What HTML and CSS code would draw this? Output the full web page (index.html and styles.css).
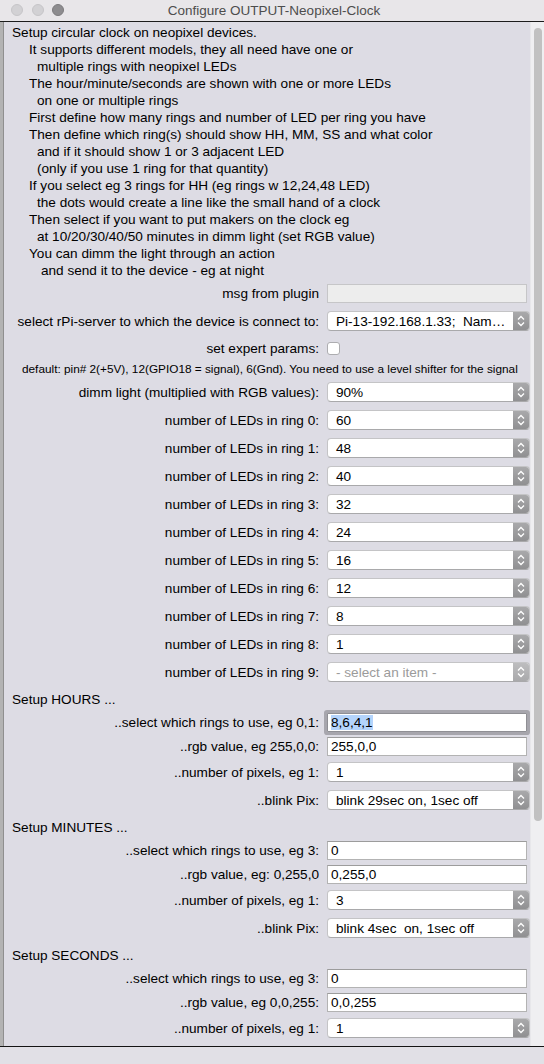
FILE: index.html
```html
<!DOCTYPE html>
<html>
<head>
<meta charset="utf-8">
<link rel="stylesheet" href="styles.css">
</head>
<body>
<div class="window">
  <div class="titlebar">
    <div class="lights"><span class="light"></span><span class="light"></span><span class="light dark"></span></div>
    <div class="title">Configure OUTPUT-Neopixel-Clock</div>
    <div></div>
  </div>
  <div class="main">
    <div class="edge"></div>
    <div class="content">
      <div class="desc">
        <div>Setup circular clock on neopixel devices.</div>
        <div class="i1">It supports different models, they all need have one or</div>
        <div class="i2">multiple rings with neopixel LEDs</div>
        <div class="i1">The hour/minute/seconds are shown with one or more LEDs</div>
        <div class="i2">on one or multiple rings</div>
        <div class="i1">First define how many rings and number of LED per ring you have</div>
        <div class="i1">Then define which ring(s) should show HH, MM, SS and what color</div>
        <div class="i2">and if it should show 1 or 3 adjacent LED</div>
        <div class="i2">(only if you use 1 ring for that quantity)</div>
        <div class="i1">If you select eg 3 rings for HH (eg rings w 12,24,48 LED)</div>
        <div class="i2">the dots would create a line like the small hand of a clock</div>
        <div class="i1">Then select if you want to put makers on the clock eg</div>
        <div class="i2">at 10/20/30/40/50 minutes in dimm light (set RGB value)</div>
        <div class="i1b">You can dimm the light through an action</div>
        <div class="i3">and send it to the device - eg at night</div>
      </div>

      <div class="row"><div class="lbl">msg from plugin</div><div class="field disabled"></div></div>
      <div class="row"><div class="lbl">select rPi-server to which the device is connect to:</div>
        <div class="popup"><div class="val">Pi-13-192.168.1.33;&nbsp; Nam…</div><div class="arr"><svg width="16" height="18" viewBox="0 0 16 18"><path d="M5 7.5 L8 4.5 L11 7.5 M5 10.5 L8 13.5 L11 10.5" fill="none" stroke="#fff" stroke-width="1.3"/></svg></div></div></div>
      <div class="row expert"><div class="lbl">set expert params:</div><div class="check"></div></div>
      <div class="note">default: pin# 2(+5V), 12(GPIO18 = signal), 6(Gnd). You need to use a level shifter for the signal</div>

      <div class="row"><div class="lbl">dimm light (multiplied with RGB values):</div>
        <div class="popup"><div class="val">90%</div><div class="arr"><svg width="16" height="18" viewBox="0 0 16 18"><path d="M5 7.5 L8 4.5 L11 7.5 M5 10.5 L8 13.5 L11 10.5" fill="none" stroke="#fff" stroke-width="1.3"/></svg></div></div></div>
      <div class="row"><div class="lbl">number of LEDs in ring 0:</div>
        <div class="popup"><div class="val">60</div><div class="arr"><svg width="16" height="18" viewBox="0 0 16 18"><path d="M5 7.5 L8 4.5 L11 7.5 M5 10.5 L8 13.5 L11 10.5" fill="none" stroke="#fff" stroke-width="1.3"/></svg></div></div></div>
      <div class="row"><div class="lbl">number of LEDs in ring 1:</div>
        <div class="popup"><div class="val">48</div><div class="arr"><svg width="16" height="18" viewBox="0 0 16 18"><path d="M5 7.5 L8 4.5 L11 7.5 M5 10.5 L8 13.5 L11 10.5" fill="none" stroke="#fff" stroke-width="1.3"/></svg></div></div></div>
      <div class="row"><div class="lbl">number of LEDs in ring 2:</div>
        <div class="popup"><div class="val">40</div><div class="arr"><svg width="16" height="18" viewBox="0 0 16 18"><path d="M5 7.5 L8 4.5 L11 7.5 M5 10.5 L8 13.5 L11 10.5" fill="none" stroke="#fff" stroke-width="1.3"/></svg></div></div></div>
      <div class="row"><div class="lbl">number of LEDs in ring 3:</div>
        <div class="popup"><div class="val">32</div><div class="arr"><svg width="16" height="18" viewBox="0 0 16 18"><path d="M5 7.5 L8 4.5 L11 7.5 M5 10.5 L8 13.5 L11 10.5" fill="none" stroke="#fff" stroke-width="1.3"/></svg></div></div></div>
      <div class="row"><div class="lbl">number of LEDs in ring 4:</div>
        <div class="popup"><div class="val">24</div><div class="arr"><svg width="16" height="18" viewBox="0 0 16 18"><path d="M5 7.5 L8 4.5 L11 7.5 M5 10.5 L8 13.5 L11 10.5" fill="none" stroke="#fff" stroke-width="1.3"/></svg></div></div></div>
      <div class="row"><div class="lbl">number of LEDs in ring 5:</div>
        <div class="popup"><div class="val">16</div><div class="arr"><svg width="16" height="18" viewBox="0 0 16 18"><path d="M5 7.5 L8 4.5 L11 7.5 M5 10.5 L8 13.5 L11 10.5" fill="none" stroke="#fff" stroke-width="1.3"/></svg></div></div></div>
      <div class="row"><div class="lbl">number of LEDs in ring 6:</div>
        <div class="popup"><div class="val">12</div><div class="arr"><svg width="16" height="18" viewBox="0 0 16 18"><path d="M5 7.5 L8 4.5 L11 7.5 M5 10.5 L8 13.5 L11 10.5" fill="none" stroke="#fff" stroke-width="1.3"/></svg></div></div></div>
      <div class="row"><div class="lbl">number of LEDs in ring 7:</div>
        <div class="popup"><div class="val">8</div><div class="arr"><svg width="16" height="18" viewBox="0 0 16 18"><path d="M5 7.5 L8 4.5 L11 7.5 M5 10.5 L8 13.5 L11 10.5" fill="none" stroke="#fff" stroke-width="1.3"/></svg></div></div></div>
      <div class="row"><div class="lbl">number of LEDs in ring 8:</div>
        <div class="popup"><div class="val">1</div><div class="arr"><svg width="16" height="18" viewBox="0 0 16 18"><path d="M5 7.5 L8 4.5 L11 7.5 M5 10.5 L8 13.5 L11 10.5" fill="none" stroke="#fff" stroke-width="1.3"/></svg></div></div></div>
      <div class="row"><div class="lbl">number of LEDs in ring 9:</div>
        <div class="popup placeholder"><div class="val">- select an item -</div><div class="arr"><svg width="16" height="18" viewBox="0 0 16 18"><path d="M5 7.5 L8 4.5 L11 7.5 M5 10.5 L8 13.5 L11 10.5" fill="none" stroke="#fff" stroke-width="1.3"/></svg></div></div></div>

      <div class="section">Setup HOURS ...</div>
      <div class="row t"><div class="lbl">..select which rings to use, eg 0,1:</div><div class="field focus"><span class="sel">8,6,4,1</span></div></div>
      <div class="row t"><div class="lbl">..rgb value, eg 255,0,0:</div><div class="field">255,0,0</div></div>
      <div class="row"><div class="lbl">..number of pixels, eg 1:</div>
        <div class="popup"><div class="val">1</div><div class="arr"><svg width="16" height="18" viewBox="0 0 16 18"><path d="M5 7.5 L8 4.5 L11 7.5 M5 10.5 L8 13.5 L11 10.5" fill="none" stroke="#fff" stroke-width="1.3"/></svg></div></div></div>
      <div class="row"><div class="lbl">..blink Pix:</div>
        <div class="popup"><div class="val">blink 29sec on, 1sec off</div><div class="arr"><svg width="16" height="18" viewBox="0 0 16 18"><path d="M5 7.5 L8 4.5 L11 7.5 M5 10.5 L8 13.5 L11 10.5" fill="none" stroke="#fff" stroke-width="1.3"/></svg></div></div></div>

      <div class="section">Setup MINUTES ...</div>
      <div class="row t"><div class="lbl">..select which rings to use, eg 3:</div><div class="field">0</div></div>
      <div class="row t"><div class="lbl">..rgb value, eg: 0,255,0</div><div class="field">0,255,0</div></div>
      <div class="row"><div class="lbl">..number of pixels, eg 1:</div>
        <div class="popup"><div class="val">3</div><div class="arr"><svg width="16" height="18" viewBox="0 0 16 18"><path d="M5 7.5 L8 4.5 L11 7.5 M5 10.5 L8 13.5 L11 10.5" fill="none" stroke="#fff" stroke-width="1.3"/></svg></div></div></div>
      <div class="row"><div class="lbl">..blink Pix:</div>
        <div class="popup"><div class="val">blink 4sec&nbsp; on, 1sec off</div><div class="arr"><svg width="16" height="18" viewBox="0 0 16 18"><path d="M5 7.5 L8 4.5 L11 7.5 M5 10.5 L8 13.5 L11 10.5" fill="none" stroke="#fff" stroke-width="1.3"/></svg></div></div></div>

      <div class="section">Setup SECONDS ...</div>
      <div class="row t"><div class="lbl">..select which rings to use, eg 3:</div><div class="field">0</div></div>
      <div class="row t"><div class="lbl">..rgb value, eg 0,0,255:</div><div class="field">0,0,255</div></div>
      <div class="row"><div class="lbl">..number of pixels, eg 1:</div>
        <div class="popup"><div class="val">1</div><div class="arr"><svg width="16" height="18" viewBox="0 0 16 18"><path d="M5 7.5 L8 4.5 L11 7.5 M5 10.5 L8 13.5 L11 10.5" fill="none" stroke="#fff" stroke-width="1.3"/></svg></div></div></div>
    </div>
    <div class="scrollbar"><div class="thumb"></div></div>
  </div>
  <div class="footer"></div>
</div>
</body>
</html>
```

FILE: styles.css
```css
html, body {
  margin: 0;
  padding: 0;
}

.window {
  width: 544px;
  height: 1064px;
  display: flex;
  flex-direction: column;
  background: #dddce4;
  font-family: "Liberation Sans", Arial, sans-serif;
  font-size: 13.6px;
  color: #000;
  overflow: hidden;
}

.titlebar {
  height: 21px;
  flex: none;
  border-bottom: 1px solid #1c1c1c;
  background: #e8e6e9;
  display: grid;
  grid-template-columns: 1fr auto 1fr;
  align-items: center;
}

.lights {
  display: flex;
  gap: 8.5px;
  padding-left: 11px;
  padding-bottom: 1px;
}

.light {
  width: 12px;
  height: 12px;
  box-sizing: border-box;
  border-radius: 50%;
  background: #d2d1d4;
  border: 1px solid #c6c5c8;
}

.light.dark {
  background: #8d8c8f;
  border-color: #7c7b7e;
}

.title {
  font-size: 13.5px;
  color: #4d4d4d;
  padding-left: 4px;
}

.main {
  height: 1024px;
  flex: none;
  display: flex;
}

.edge {
  width: 3px;
  flex: none;
  background: #b3b3b3;
  border-right: 1px solid #8f8f8f;
}

.content {
  width: 526px;
  flex: none;
  overflow: hidden;
}

.desc {
  padding: 2px 0 0 8px;
  line-height: 17px;
  white-space: nowrap;
}

.i1 { padding-left: 17px; }
.i1b { padding-left: 17px; }
.i2 { padding-left: 25px; }
.i3 { padding-left: 29px; }

.row {
  display: flex;
  align-items: center;
  height: 28px;
}

.row.t {
  height: 24px;
}

.row.expert {
  height: 26px;
}

.lbl {
  width: 315px;
  flex: none;
  margin-right: 8px;
  text-align: right;
  white-space: nowrap;
}

.note {
  height: 17px;
  line-height: 17px;
  font-size: 11.8px;
  padding-left: 18px;
  white-space: nowrap;
}

.section {
  height: 22px;
  margin-top: 2px;
  display: flex;
  align-items: center;
  padding-left: 8px;
}

.popup {
  width: 203px;
  height: 20px;
  box-sizing: border-box;
  border: 1px solid #c4c4c6;
  border-bottom-color: #a9a9ab;
  border-radius: 4px;
  background: #fff;
  display: flex;
  align-items: center;
  overflow: hidden;
}

.popup .val {
  flex: 1;
  padding-left: 8px;
  white-space: nowrap;
  overflow: hidden;
}

.popup .arr {
  width: 16px;
  flex: none;
  align-self: stretch;
  background: linear-gradient(#a9a9ab, #909092);
  display: flex;
  align-items: center;
  justify-content: center;
}

.popup .arr svg {
  display: block;
}

.popup.placeholder .val {
  color: #9b9b9b;
}

.popup.placeholder .arr {
  background: linear-gradient(#bdbdbf, #a9a9ab);
}

.field {
  width: 200px;
  height: 19px;
  box-sizing: border-box;
  border: 1px solid #b3b3b3;
  border-top-color: #9c9c9c;
  background: #fff;
  padding-left: 3px;
  line-height: 17px;
  white-space: nowrap;
}

.field.disabled {
  background: #ededed;
  border-color: #c6c6c8;
}

.field.focus {
  border-color: #8f8f94;
  box-shadow: 0 0 0 3px #a7a6ad;
  border-radius: 1px;
}

.sel {
  background: #b4d4fc;
}

.check {
  width: 13px;
  height: 13px;
  box-sizing: border-box;
  border: 1px solid #adadb0;
  border-radius: 3px;
  background: #fff;
}

.scrollbar {
  width: 13px;
  flex: none;
  border-left: 1px solid #e7e7ea;
  background: #efeff1;
  padding-top: 6px;
}

.thumb {
  width: 8px;
  height: 793px;
  margin-left: 3px;
  border-radius: 4px;
  background: #c1c1c1;
}

.footer {
  height: 17px;
  flex: none;
  border-top: 1px solid #141414;
  background: #e1e0e6;
}
```
